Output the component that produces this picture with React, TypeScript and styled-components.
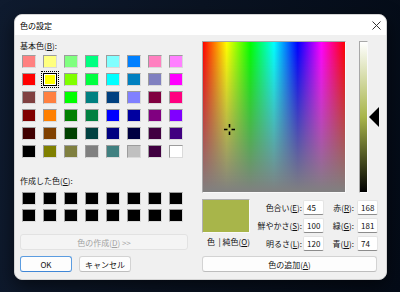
import React from "react";
import styled, { createGlobalStyle } from "styled-components";

const GlobalStyle = createGlobalStyle`
  html, body { margin: 0; padding: 0; }
  body {
    width: 400px;
    height: 292px;
    overflow: hidden;
    background: linear-gradient(100deg, #0f1b2f 0%, #0a1322 45%, #040b17 100%);
    font-family: "Noto Sans CJK JP", "Noto Sans", sans-serif;
    font-size: 8px;
    color: #111;
  }
`;

const Dialog = styled.div`
  box-sizing: border-box;
  margin: 14px 0 0 14px;
  width: 373px;
  height: 266px;
  border: 1px solid #d4d4d4;
  border-radius: 8px;
  overflow: hidden;
  background: #f0f0f0;
  box-shadow: 0 6px 18px rgba(0, 0, 0, 0.55);
  display: flex;
  flex-direction: column;
`;

const TitleBar = styled.div`
  height: 20px;
  flex: none;
  background: #fff;
  display: flex;
  align-items: center;
  justify-content: space-between;
  padding-left: 5px;
  color: #000;
`;

const CloseBox = styled.div`
  width: 20px;
  height: 20px;
  display: flex;
  align-items: center;
  justify-content: center;
`;

const Body = styled.div`
  flex: 1;
  display: flex;
  gap: 14px;
  padding: 6px 6px 0 5px;
`;

const LeftCol = styled.div`
  width: 168px;
  display: flex;
  flex-direction: column;
`;

const RightCol = styled.div`
  width: 178px;
  display: flex;
  flex-direction: column;
`;

const SectionLabel = styled.div<{ $gap?: number }>`
  height: 10px;
  line-height: 10px;
  margin-top: ${(p) => p.$gap ?? 0}px;
  white-space: nowrap;
`;

const SwatchGrid = styled.div<{ $gap: number; $rowGap: number }>`
  display: grid;
  grid-template-columns: repeat(8, 14px);
  grid-auto-rows: 13px;
  column-gap: 7px;
  row-gap: ${(p) => p.$rowGap}px;
  margin: ${(p) => p.$gap}px 0 0 2px;
`;

const Swatch = styled.div<{ $color: string; $selected?: boolean }>`
  box-sizing: border-box;
  background: ${(p) => p.$color};
  border: 1px solid;
  border-color: ${(p) =>
    p.$selected ? "#000" : "#9c9c9c #dadada #dadada #9c9c9c"};
  box-shadow: ${(p) => (p.$selected ? "inset 0 0 0 1px #fff" : "none")};
  outline: ${(p) => (p.$selected ? "1px dotted #000" : "none")};
  outline-offset: 1px;
`;

const Button = styled.div<{
  $width: number;
  $top?: number;
  $primary?: boolean;
  $disabled?: boolean;
}>`
  box-sizing: border-box;
  width: ${(p) => p.$width}px;
  height: 16px;
  margin-top: ${(p) => p.$top ?? 0}px;
  border-radius: 3px;
  display: flex;
  align-items: center;
  justify-content: center;
  white-space: nowrap;
  background: ${(p) => (p.$disabled ? "#f4f4f4" : "#fdfdfd")};
  border: 1px solid ${(p) => (p.$primary ? "#5b9ce0" : p.$disabled ? "#e2e2e2" : "#d3d3d3")};
  border-bottom-color: ${(p) => (p.$primary ? "#3f86d6" : p.$disabled ? "#e2e2e2" : "#bdbdbd")};
  color: ${(p) => (p.$disabled ? "#a2a2a2" : "#111")};
`;

const ButtonRow = styled.div`
  display: flex;
  gap: 7px;
  margin-top: 6px;
`;

const SpectrumRow = styled.div`
  display: flex;
  height: 152px;
`;

const Spectrum = styled.div`
  position: relative;
  box-sizing: border-box;
  width: 145px;
  height: 152px;
  border: 1px solid;
  border-color: #a8a8a8 #fafafa #fafafa #a8a8a8;
  background:
    linear-gradient(to bottom, rgba(128, 128, 128, 0), rgb(128, 128, 128)),
    linear-gradient(to right, #f00, #ff0 16.7%, #0f0 33.3%, #0ff 50%, #00f 66.7%, #f0f 83.3%, #f00);
`;

const Cross = styled.svg`
  position: absolute;
  width: 11px;
  height: 11px;
`;

const LumBar = styled.div<{ $color: string }>`
  box-sizing: border-box;
  margin-left: 13px;
  width: 9px;
  height: 152px;
  border: 1px solid;
  border-color: #a8a8a8 #fafafa #fafafa #a8a8a8;
  background: linear-gradient(to bottom, #fff, ${(p) => p.$color}, #000);
`;

const ArrowTrack = styled.div`
  position: relative;
  width: 11px;
  margin-left: 1px;
`;

const Arrow = styled.svg`
  position: absolute;
  left: 0;
  width: 10px;
  height: 20px;
`;

const LowerRow = styled.div`
  display: flex;
  margin-top: 6px;
`;

const PreviewCol = styled.div`
  width: 48px;
  display: flex;
  flex-direction: column;
`;

const Preview = styled.div<{ $color: string }>`
  box-sizing: border-box;
  height: 34px;
  background: ${(p) => p.$color};
  border: 1px solid;
  border-color: #b0b0b0 #fafafa #fafafa #b0b0b0;
`;

const PreviewLabel = styled.div`
  margin-top: 4px;
  height: 10px;
  line-height: 10px;
  padding-left: 5px;
  white-space: nowrap;
`;

const Fields = styled.div`
  margin: 1px 0 0 2px;
  display: grid;
  grid-template-columns: 51px 21px 33px 21px;
  grid-template-rows: repeat(3, 15px);
  row-gap: 3px;
  align-items: center;
`;

const FieldLabel = styled.div<{ $pad?: number }>`
  text-align: right;
  padding-right: ${(p) => p.$pad ?? 1}px;
  white-space: nowrap;
`;

const Input = styled.div`
  box-sizing: border-box;
  height: 15px;
  background: #fff;
  border: 1px solid #e4e4e4;
  border-bottom-color: #8c8c8c;
  border-radius: 2px;
  padding-left: 3px;
  line-height: 13px;
`;

const basic = [
  ["#FF8080", "#FFFF80", "#80FF80", "#00FF80", "#80FFFF", "#0080FF", "#FF80C0", "#FF80FF"],
  ["#FF0000", "#FFFF00", "#80FF00", "#00FF40", "#00FFFF", "#0080C0", "#8080C0", "#FF00FF"],
  ["#804040", "#FF8040", "#00FF00", "#008080", "#004080", "#8080FF", "#800040", "#FF0080"],
  ["#800000", "#FF8000", "#008000", "#008040", "#0000FF", "#0000A0", "#800080", "#8000FF"],
  ["#400000", "#804000", "#004000", "#004040", "#000080", "#000040", "#400040", "#400080"],
  ["#000000", "#808000", "#808040", "#808080", "#408080", "#C0C0C0", "#400040", "#FFFFFF"],
];

const hsl = { h: 45, s: 100, l: 120 };
const rgb = { r: 168, g: 181, b: 74 };
const current = `rgb(${rgb.r}, ${rgb.g}, ${rgb.b})`;

// label, access key, value — left column is HSL, right column is RGB
const fieldRows: [string, string, number, string, string, number][] = [
  ["色合い", "E", hsl.h, "赤", "R", rgb.r],
  ["鮮やかさ", "S", hsl.s, "緑", "G", rgb.g],
  ["明るさ", "L", hsl.l, "青", "U", rgb.b],
];

export default function App() {
  const crossX = (hsl.h / 239) * 143 - 5.5;
  const crossY = (1 - hsl.s / 240) * 150 - 5.5;
  const arrowY = (1 - hsl.l / 240) * 152 - 10;

  return (
    <>
      <GlobalStyle />
      <Dialog>
        <TitleBar>
          <span>色の設定</span>
          <CloseBox>
            <svg width="9" height="9" viewBox="0 0 9 9">
              <path d="M0.5 0.5L8.5 8.5M8.5 0.5L0.5 8.5" stroke="#333" strokeWidth="1" />
            </svg>
          </CloseBox>
        </TitleBar>
        <Body>
          <LeftCol>
            <SectionLabel>
              基本色(<u>B</u>):
            </SectionLabel>
            <SwatchGrid $gap={4} $rowGap={5}>
              {basic.flat().map((c, i) => (
                <Swatch key={i} $color={c} $selected={i === 9} />
              ))}
            </SwatchGrid>
            <SectionLabel $gap={18}>
              作成した色(<u>C</u>):
            </SectionLabel>
            <SwatchGrid $gap={6} $rowGap={4}>
              {Array.from({ length: 16 }).map((_, i) => (
                <Swatch key={i} $color="#000" />
              ))}
            </SwatchGrid>
            <Button $width={168} $top={12} $disabled>
              色の作成(<u>D</u>) &gt;&gt;
            </Button>
            <ButtonRow>
              <Button $width={52} $primary>
                OK
              </Button>
              <Button $width={52}>キャンセル</Button>
            </ButtonRow>
          </LeftCol>
          <RightCol>
            <SpectrumRow>
              <Spectrum>
                <Cross viewBox="0 0 11 11" style={{ left: crossX, top: crossY }}>
                  <path d="M0 5.5H3.5M7.5 5.5H11M5.5 0V3.5M5.5 7.5V11" stroke="#000" strokeWidth="1.6" />
                </Cross>
              </Spectrum>
              <LumBar $color={current} />
              <ArrowTrack>
                <Arrow viewBox="0 0 10 20" style={{ top: arrowY }}>
                  <polygon points="10,0 10,20 0,10" fill="#000" />
                </Arrow>
              </ArrowTrack>
            </SpectrumRow>
            <LowerRow>
              <PreviewCol>
                <Preview $color={current} />
                <PreviewLabel>
                  色&nbsp;&nbsp;|&nbsp;純色(<u>O</u>)
                </PreviewLabel>
              </PreviewCol>
              <Fields>
                {fieldRows.map(([l1, k1, v1, l2, k2, v2]) => (
                  <React.Fragment key={k1}>
                    <FieldLabel>
                      {l1}(<u>{k1}</u>):
                    </FieldLabel>
                    <Input>{v1}</Input>
                    <FieldLabel $pad={3}>
                      {l2}(<u>{k2}</u>):
                    </FieldLabel>
                    <Input>{v2}</Input>
                  </React.Fragment>
                ))}
              </Fields>
            </LowerRow>
            <Button $width={175} $top={5}>
              色の追加(<u>A</u>)
            </Button>
          </RightCol>
        </Body>
      </Dialog>
    </>
  );
}
